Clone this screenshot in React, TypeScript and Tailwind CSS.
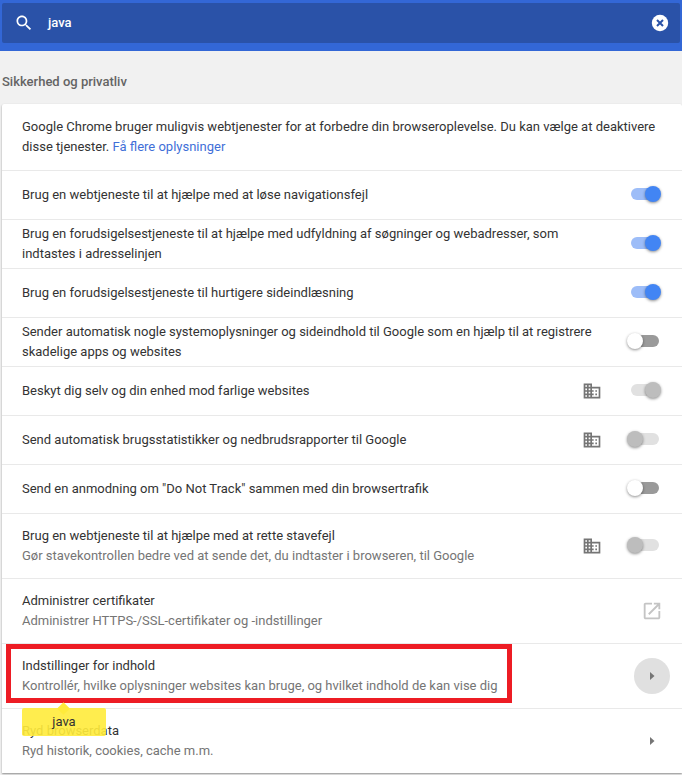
import type { ReactNode } from "react";

type ToggleKind = "on" | "off" | "policyOn" | "policyOff";

function Toggle({ kind }: { kind: ToggleKind }) {
  const isOn = kind === "on" || kind === "policyOn";
  const bar = {
    on: "bg-[#9dbdf8]",
    off: "bg-[#9a9a9a]",
    policyOn: "bg-[#e1e1e1]",
    policyOff: "bg-[#e1e1e1]",
  }[kind];
  const knob = {
    on: "bg-[#4285f4]",
    off: "bg-white",
    policyOn: "bg-[#bdbdbd]",
    policyOff: "bg-[#bdbdbd]",
  }[kind];
  return (
    <div className={`mb-[2px] flex h-[12px] w-[28px] items-center rounded-full ${bar} ${isOn ? "justify-end" : "justify-start"}`}>
      <div className={`h-4 w-4 shrink-0 rounded-full shadow-[0_1px_3px_rgba(0,0,0,0.45)] ${knob} ${isOn ? "mr-[-2px]" : "ml-[-4px]"}`} />
    </div>
  );
}

function PolicyIcon() {
  return (
    <svg width="20" height="20" viewBox="0 0 24 24" fill="#757575">
      <path d="M12 7V3H2v18h20V7H12zM6 19H4v-2h2v2zm0-4H4v-2h2v2zm0-4H4V9h2v2zm0-4H4V5h2v2zm4 12H8v-2h2v2zm0-4H8v-2h2v2zm0-4H8V9h2v2zm0-4H8V5h2v2zm10 12h-8v-2h2v-2h-2v-2h2v-2h-2V9h8v10zm-2-8h-2v2h2v-2zm0 4h-2v2h2v-2z" />
    </svg>
  );
}

function Arrow() {
  return (
    <svg width="24" height="24" viewBox="0 0 24 24" fill="#757575">
      <path d="M10 8v8l4.5-4z" />
    </svg>
  );
}

function Row({
  h,
  title,
  sub,
  policy,
  right,
}: {
  h: string;
  title: ReactNode;
  sub?: string;
  policy?: boolean;
  right: ReactNode;
}) {
  return (
    <div className={`flex items-center border-t border-[#e9e9e9] pl-5 ${h}`}>
      <div className="min-w-0 flex-1 leading-5">
        <div className="text-[#333333]">{title}</div>
        {sub && <div className="text-[#757575]">{sub}</div>}
      </div>
      {policy && (
        <div className="mr-[29px] flex items-center">
          <PolicyIcon />
        </div>
      )}
      <div className="flex w-[51px] shrink-0 items-center">{right}</div>
    </div>
  );
}

export default function App() {
  return (
    <div className="relative h-[775px] w-[682px] overflow-hidden bg-[#f1f1f1] font-['Roboto',sans-serif] text-[13px]">
      <div className="h-[51px] bg-[#3367d6] pt-[3px]">
        <div className="mx-[2px] flex h-10 items-center rounded-[2px] bg-[#2a52a8] pr-[11px] pl-3 text-white">
          <svg width="20" height="20" viewBox="0 0 24 24" fill="white">
            <path d="M15.5 14h-.79l-.28-.27C15.41 12.59 16 11.11 16 9.5 16 5.91 13.09 3 9.5 3S3 5.91 3 9.5 5.91 16 9.5 16c1.61 0 3.09-.59 4.23-1.57l.27.28v.79l5 4.99L20.49 19l-4.99-5zm-6 0C7.01 14 5 11.99 5 9.5S7.01 5 9.5 5 14 7.01 14 9.5 11.99 14 9.5 14z" />
          </svg>
          <span className="ml-[14px] flex-1 font-medium">java</span>
          <svg width="18" height="18" viewBox="0 0 18 18">
            <circle cx="9" cy="9" r="8.2" fill="white" />
            <path d="M6 6l6 6M12 6l-6 6" stroke="#2a52a8" strokeWidth="2" />
          </svg>
        </div>
      </div>

      <div className="flex h-[53px] items-start pt-[21px] pl-[2px] font-medium text-[#646464]">
        Sikkerhed og privatliv
      </div>

      <div className="ml-[2px] h-[669px] rounded-t-[2px] bg-white shadow-[0_1px_2px_rgba(0,0,0,0.4)]">
        <div className="flex h-[66px] items-center pr-5 pl-5 leading-5 text-[#333333]">
          <div>
            Google Chrome bruger muligvis webtjenester for at forbedre din browseroplevelse. Du kan vælge at deaktivere
            disse tjenester. <span className="text-[#3f6fd8]">Få flere oplysninger</span>
          </div>
        </div>
        <Row h="h-[49px]" title="Brug en webtjeneste til at hjælpe med at løse navigationsfejl" right={<Toggle kind="on" />} />
        <Row
          h="h-[49px]"
          title={
            <>
              Brug en forudsigelsestjeneste til at hjælpe med udfyldning af søgninger og webadresser, som
              <br />
              indtastes i adresselinjen
            </>
          }
          right={<Toggle kind="on" />}
        />
        <Row h="h-[49px]" title="Brug en forudsigelsestjeneste til hurtigere sideindlæsning" right={<Toggle kind="on" />} />
        <Row
          h="h-[49px]"
          title={
            <>
              Sender automatisk nogle systemoplysninger og sideindhold til Google som en hjælp til at registrere
              <br />
              skadelige apps og websites
            </>
          }
          right={<Toggle kind="off" />}
        />
        <Row h="h-[49px]" title="Beskyt dig selv og din enhed mod farlige websites" policy right={<Toggle kind="policyOn" />} />
        <Row
          h="h-[49px]"
          title="Send automatisk brugsstatistikker og nedbrudsrapporter til Google"
          policy
          right={<Toggle kind="policyOff" />}
        />
        <Row h="h-[49px]" title={'Send en anmodning om "Do Not Track" sammen med din browsertrafik'} right={<Toggle kind="off" />} />
        <Row
          h="h-[65px]"
          title="Brug en webtjeneste til at hjælpe med at rette stavefejl"
          sub="Gør stavekontrollen bedre ved at sende det, du indtaster i browseren, til Google"
          policy
          right={<Toggle kind="policyOff" />}
        />
        <Row
          h="h-[65px]"
          title="Administrer certifikater"
          sub="Administrer HTTPS-/SSL-certifikater og -indstillinger"
          right={
            <svg width="22" height="22" viewBox="0 0 24 24" fill="#c4c4c4" className="ml-[10px]">
              <path d="M19 19H5V5h7V3H5c-1.11 0-2 .9-2 2v14c0 1.1.89 2 2 2h14c1.1 0 2-.9 2-2v-7h-2v7zM14 3v2h3.59l-9.83 9.83 1.41 1.41L19 6.41V10h2V3h-7z" />
            </svg>
          }
        />
        <Row
          h="h-[65px]"
          title="Indstillinger for indhold"
          sub="Kontrollér, hvilke oplysninger websites kan bruge, og hvilket indhold de kan vise dig"
          right={
            <div className="ml-[3px] flex h-9 w-9 items-center justify-center rounded-full bg-[#e0e0e0]">
              <Arrow />
            </div>
          }
        />
        <Row
          h="h-[65px]"
          title="Ryd browserdata"
          sub="Ryd historik, cookies, cache m.m."
          right={
            <div className="ml-[9px] flex">
              <Arrow />
            </div>
          }
        />
      </div>

      {/* annotation box and search bubble sit on top of the page */}
      <div className="absolute top-[644px] left-[6px] h-[59px] w-[506px] border-[5px] border-[#ed1c24]" />
      <div className="absolute top-[708px] left-[22px] flex h-[28px] w-[84px] items-center justify-center rounded-[2px] bg-[#ffeb3b]/90 text-[#333333]">
        <div className="absolute top-[-4px] left-[37px] h-[9px] w-[9px] rotate-45 bg-[#ffeb3b]" />
        <span className="relative">java</span>
      </div>
    </div>
  );
}
